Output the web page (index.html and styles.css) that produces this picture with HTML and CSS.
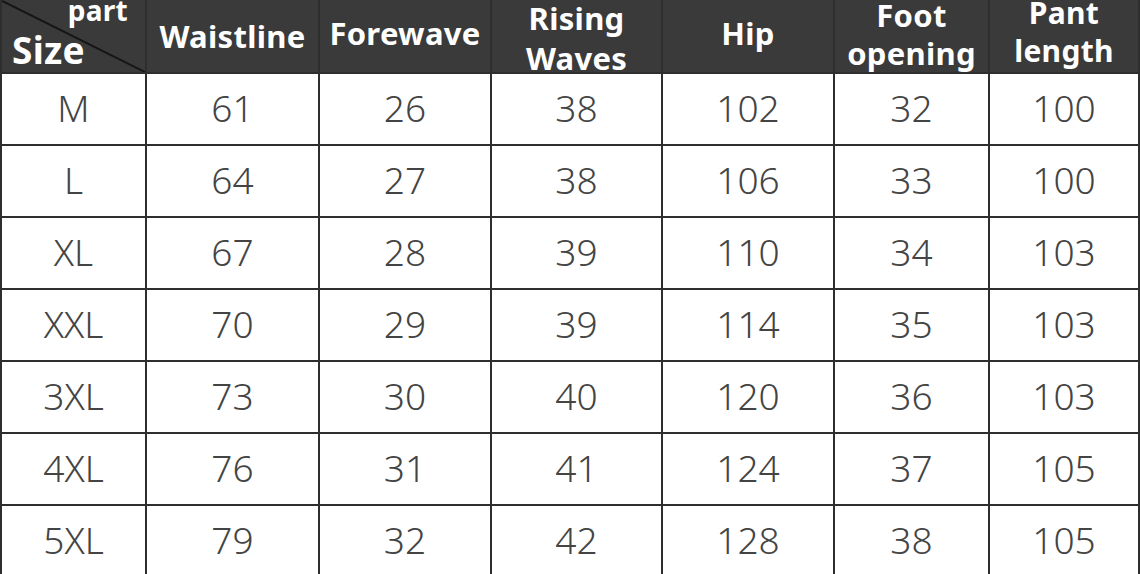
FILE: index.html
```html
<!DOCTYPE html>
<html>
<head>
<meta charset="utf-8">
<link rel="stylesheet" href="styles.css">
</head>
<body>
<div class="chart">
  <div class="hcell corner">
    <svg class="diag" viewBox="0 0 143 72" preserveAspectRatio="none"><line x1="0" y1="1" x2="143" y2="72" stroke="#151515" stroke-width="2"/></svg>
    <span class="part">part</span>
    <span class="size">Size</span>
  </div>
  <div class="hcell low">Waistline</div>
  <div class="hcell">Forewave</div>
  <div class="hcell two"><span class="lines rise">Rising<br>Waves</span></div>
  <div class="hcell">Hip</div>
  <div class="hcell two"><span class="lines foot">Foot<br>opening</span></div>
  <div class="hcell two"><span class="lines pant">Pant<br>length</span></div>

  <div class="cell">M</div><div class="cell">61</div><div class="cell">26</div><div class="cell">38</div><div class="cell">102</div><div class="cell">32</div><div class="cell">100</div>
  <div class="cell">L</div><div class="cell">64</div><div class="cell">27</div><div class="cell">38</div><div class="cell">106</div><div class="cell">33</div><div class="cell">100</div>
  <div class="cell">XL</div><div class="cell">67</div><div class="cell">28</div><div class="cell">39</div><div class="cell">110</div><div class="cell">34</div><div class="cell">103</div>
  <div class="cell">XXL</div><div class="cell">70</div><div class="cell">29</div><div class="cell">39</div><div class="cell">114</div><div class="cell">35</div><div class="cell">103</div>
  <div class="cell">3XL</div><div class="cell">73</div><div class="cell">30</div><div class="cell">40</div><div class="cell">120</div><div class="cell">36</div><div class="cell">103</div>
  <div class="cell">4XL</div><div class="cell">76</div><div class="cell">31</div><div class="cell">41</div><div class="cell">124</div><div class="cell">37</div><div class="cell">105</div>
  <div class="cell">5XL</div><div class="cell">79</div><div class="cell">32</div><div class="cell">42</div><div class="cell">128</div><div class="cell">38</div><div class="cell">105</div>
</div>
</body>
</html>
```
FILE: styles.css
```css
html, body {
  margin: 0;
  padding: 0;
  background: #ffffff;
  overflow: hidden;
}
.chart {
  display: grid;
  grid-template-columns: 143px 171px 170px 169px 170px 153px 148px;
  grid-template-rows: 72px repeat(7, 70px);
  gap: 2px;
  padding: 0 2px 2px 2px;
  width: 1140px;
  box-sizing: border-box;
  background: #2e2e2e;
  font-family: "Noto Sans", "Open Sans", sans-serif;
}
.hcell {
  background: #3a3a3a;
  color: #ffffff;
  font-weight: 700;
  font-size: 31px;
  line-height: 35px;
  display: flex;
  align-items: center;
  justify-content: center;
  text-align: center;
  letter-spacing: 0.3px;
  padding-bottom: 6px;
  box-sizing: border-box;
}
.hcell.low {
  padding-bottom: 0;
}
.hcell.two {
  align-items: flex-start;
  padding-bottom: 0;
}
.lines {
  display: block;
}
.rise {
  line-height: 40px;
  margin-top: -2px;
}
.foot {
  line-height: 38px;
  margin-top: -4px;
}
.pant {
  line-height: 38px;
  margin-top: -6px;
  font-size: 30px;
}
.corner {
  position: relative;
  flex-direction: column;
  align-items: stretch;
  justify-content: flex-start;
  padding-bottom: 0;
}
.diag {
  position: absolute;
  left: 0;
  top: 0;
  width: 100%;
  height: 100%;
}
.part {
  position: relative;
  align-self: flex-end;
  margin-right: 17px;
  font-size: 28px;
  line-height: 28px;
  margin-top: -4px;
}
.size {
  position: relative;
  align-self: flex-start;
  margin-left: 10px;
  font-size: 37px;
  line-height: 44px;
  margin-top: 4px;
}
.cell {
  background: #ffffff;
  color: #444444;
  font-size: 37px;
  font-weight: 300;
  display: flex;
  align-items: center;
  justify-content: center;
  padding-bottom: 4px;
  box-sizing: border-box;
}
```
